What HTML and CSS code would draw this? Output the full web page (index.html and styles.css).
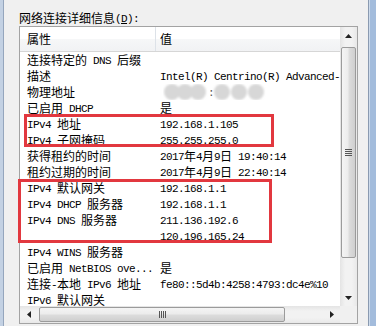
FILE: index.html
```html
<!DOCTYPE html>
<html lang="zh-CN">
<head>
    <meta charset="UTF-8">
    <title>网络连接详细信息</title>
    <link rel="stylesheet" href="styles.css">
</head>
<body>
    <div class="win">
        <div class="frame-l"></div>
        <div class="main">
            <div class="label">网络连接详细信息<span class="m">(<u>D</u>):</span></div>
            <div class="list">
                <div class="view">
                    <div class="head">
                        <div class="c1">属性</div>
                        <div class="c2">值</div>
                    </div>
                    <div class="row"><div class="c1">连接特定的<span class="m"> DNS </span>后缀</div><div class="c2"></div></div>
                    <div class="row"><div class="c1">描述</div><div class="c2"><span class="m">Intel(R) Centrino(R) Advanced-N 6205</span></div></div>
                    <div class="row">
                        <div class="c1">物理地址</div>
                        <div class="c2">
                            <svg class="blur" width="110" height="16" viewBox="0 0 110 16">
                                <defs><filter id="soft"><feGaussianBlur stdDeviation="1.2"/></filter></defs>
                                <g fill="#d7d7d7" filter="url(#soft)">
                                    <circle cx="9" cy="8" r="8"/>
                                    <circle cx="22" cy="8" r="8"/>
                                    <circle cx="35" cy="8" r="8"/>
                                    <circle cx="59" cy="8" r="8"/>
                                    <circle cx="76" cy="8" r="8"/>
                                    <circle cx="93" cy="8" r="8"/>
                                </g>
                                <text x="45" y="12" font-family="Liberation Mono" font-size="11" fill="#555">:</text>
                            </svg>
                        </div>
                    </div>
                    <div class="row"><div class="c1">已启用<span class="m"> DHCP</span></div><div class="c2">是</div></div>
                    <div class="row"><div class="c1"><span class="m">IPv4 </span>地址</div><div class="c2"><span class="m">192.168.1.105</span></div></div>
                    <div class="row"><div class="c1"><span class="m">IPv4 </span>子网掩码</div><div class="c2"><span class="m">255.255.255.0</span></div></div>
                    <div class="row"><div class="c1">获得租约的时间</div><div class="c2"><span class="m">2017</span>年<span class="m">4</span>月<span class="m">9</span>日<span class="m"> 19:40:14</span></div></div>
                    <div class="row"><div class="c1">租约过期的时间</div><div class="c2"><span class="m">2017</span>年<span class="m">4</span>月<span class="m">9</span>日<span class="m"> 22:40:14</span></div></div>
                    <div class="row"><div class="c1"><span class="m">IPv4 </span>默认网关</div><div class="c2"><span class="m">192.168.1.1</span></div></div>
                    <div class="row"><div class="c1"><span class="m">IPv4 DHCP </span>服务器</div><div class="c2"><span class="m">192.168.1.1</span></div></div>
                    <div class="row"><div class="c1"><span class="m">IPv4 DNS </span>服务器</div><div class="c2"><span class="m">211.136.192.6</span></div></div>
                    <div class="row"><div class="c1"></div><div class="c2"><span class="m">120.196.165.24</span></div></div>
                    <div class="row"><div class="c1"><span class="m">IPv4 WINS </span>服务器</div><div class="c2"></div></div>
                    <div class="row"><div class="c1">已启用<span class="m"> NetBIOS ove...</span></div><div class="c2">是</div></div>
                    <div class="row"><div class="c1">连接<span class="m">-</span>本地<span class="m"> IPv6 </span>地址</div><div class="c2"><span class="m">fe80::5d4b:4258:4793:dc4e%10</span></div></div>
                    <div class="row"><div class="c1"><span class="m">IPv6 </span>默认网关</div><div class="c2"></div></div>
                </div>

                <div class="vbar">
                    <div class="btn">
                        <svg width="7" height="4" viewBox="0 0 7 4"><path d="M3.5 0 L7 4 L0 4 Z" fill="#222"/></svg>
                    </div>
                    <div class="track">
                        <div class="thumb"><span class="grip"></span></div>
                    </div>
                    <div class="btn">
                        <svg width="7" height="4" viewBox="0 0 7 4"><path d="M0 0 L7 0 L3.5 4 Z" fill="#222"/></svg>
                    </div>
                </div>

                <div class="hbar">
                    <div class="btn">
                        <svg width="4" height="7" viewBox="0 0 4 7"><path d="M0 3.5 L4 0 L4 7 Z" fill="#222"/></svg>
                    </div>
                    <div class="track">
                        <div class="thumb"><span class="grip"></span></div>
                    </div>
                    <div class="btn">
                        <svg width="4" height="7" viewBox="0 0 4 7"><path d="M0 0 L4 3.5 L0 7 Z" fill="#222"/></svg>
                    </div>
                </div>

                <div class="corner"></div>

                <!-- red highlight boxes drawn over the list -->
                <div class="mark mark-ip"></div>
                <div class="mark mark-gw"></div>
            </div>
        </div>
        <div class="frame-r"></div>
    </div>
</body>
</html>
```

FILE: styles.css
```css
body {
    margin: 0;
    background: #f0f0f0;
    font-family: "Noto Sans CJK SC", sans-serif;
    font-size: 12px;
    color: #000;
}

.win {
    display: flex;
    width: 376px;
    height: 326px;
    overflow: hidden;
}

.frame-l {
    width: 3px;
    background: #c3d1e3;
    border-right: 1px solid #95a6bd;
}

.frame-r {
    width: 7px;
    border-left: 1px solid #8a9ab0;
    background: linear-gradient(90deg, #cddbec 0 1px, #a3bcdc 1px);
}

.main {
    flex: 1;
    padding: 10px 0 0 15px;
}

.m {
    font-family: "Liberation Mono", monospace;
    font-size: 11px;
    letter-spacing: -0.6px;
    vertical-align: 1px;
}

.label {
    height: 16px;
    line-height: 16px;
    white-space: nowrap;
}

.list {
    position: relative;
    width: 337px;
    height: 296px;
    border: 1px solid #a3a3a3;
    display: grid;
    grid-template-columns: 320px 17px;
    grid-template-rows: 279px 17px;
}

.view {
    background: #fff;
    overflow: hidden;
}

.head {
    display: flex;
    height: 24px;
    line-height: 24px;
    border-bottom: 1px solid #d6d6d6;
    background: linear-gradient(#ffffff, #ffffff 50%, #f6f7f8 50%, #f1f2f4);
}

.head .c1 {
    border-right: 1px solid #dde2e8;
}

.row {
    display: flex;
    height: 16px;
    line-height: 16px;
}

.c1 {
    width: 136px;
    box-sizing: border-box;
    padding-left: 7px;
    white-space: nowrap;
    overflow: hidden;
}

.c2 {
    flex: 1;
    padding-left: 4px;
    white-space: nowrap;
    overflow: hidden;
}

.blur {
    display: block;
    margin-left: 3px;
}

/* scrollbars */
.vbar {
    display: flex;
    flex-direction: column;
    background: linear-gradient(90deg, #e4e4e4, #f2f2f2 30%, #f2f2f2 70%, #e8e8e8);
}

.hbar {
    display: flex;
    background: linear-gradient(#e4e4e4, #f2f2f2 30%, #f2f2f2 70%, #e8e8e8);
}

.btn {
    flex: 0 0 17px;
    display: flex;
    align-items: center;
    justify-content: center;
}

.vbar .track {
    flex: 1;
    padding-top: 3px;
}

.hbar .track {
    flex: 1;
    padding-left: 2px;
}

.thumb {
    box-sizing: border-box;
    border: 1px solid #9b9b9b;
    border-radius: 2px;
    display: flex;
    align-items: center;
    justify-content: center;
}

.vbar .thumb {
    height: 211px;
    margin: 0 1px;
    background: linear-gradient(90deg, #f4f4f4, #ececec 45%, #dcdcdc 55%, #cfcfcf);
}

.hbar .thumb {
    width: 246px;
    height: 15px;
    margin-top: 1px;
    background: linear-gradient(#f4f4f4, #ececec 45%, #dcdcdc 55%, #cfcfcf);
}

.vbar .grip {
    width: 7px;
    height: 7px;
    background: repeating-linear-gradient(#555 0 1px, transparent 1px 2px);
}

.hbar .grip {
    width: 7px;
    height: 7px;
    background: repeating-linear-gradient(90deg, #555 0 1px, transparent 1px 2px);
}

.corner {
    background: #f0f0f0;
}

.mark {
    position: absolute;
    border: 3px solid #e2383f;
    box-sizing: border-box;
    pointer-events: none;
}

.mark-ip {
    left: 4px;
    top: 87px;
    width: 250px;
    height: 33px;
}

.mark-gw {
    left: -2px;
    top: 152px;
    width: 254px;
    height: 64px;
}
```
